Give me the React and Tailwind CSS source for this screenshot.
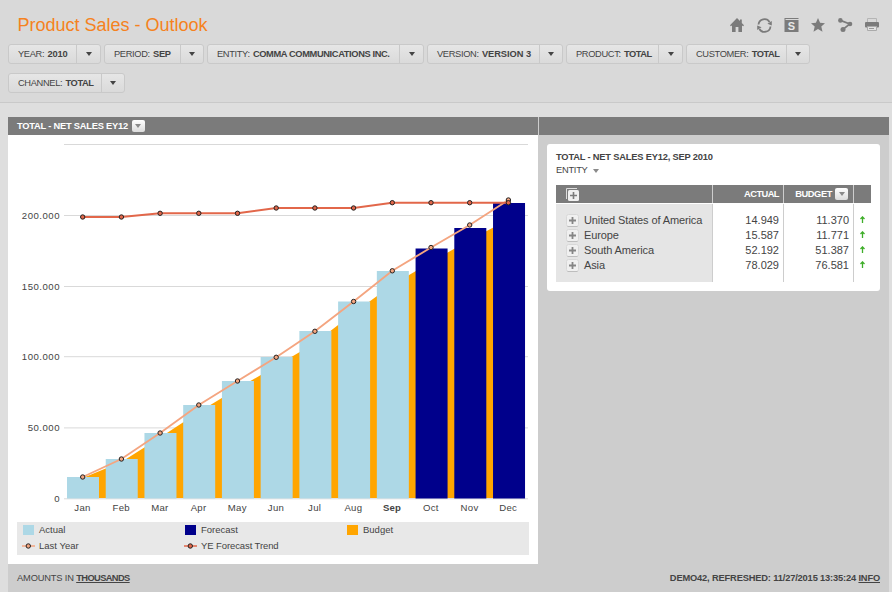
import React from 'react';

const filterRows = [
    [
        { label: 'YEAR:', value: '2010', size: 'w-[93px]', arrow: 'w-6', tracking: 'tracking-[-0.1px]' },
        { label: 'PERIOD:', value: 'SEP', size: 'w-[100px]', arrow: 'w-[23px]', tracking: 'tracking-[-0.3px]' },
        { label: 'ENTITY:', value: 'COMMA COMMUNICATIONS INC.', size: 'w-[217px]', arrow: 'w-6', tracking: 'tracking-[-0.38px]' },
        { label: 'VERSION:', value: 'VERSION 3', size: 'w-[136px]', arrow: 'w-[23px]', tracking: 'tracking-[-0.05px]' },
        { label: 'PRODUCT:', value: 'TOTAL', size: 'w-[117px]', arrow: 'w-6', tracking: 'tracking-[-0.5px]' },
        { label: 'CUSTOMER:', value: 'TOTAL', size: 'w-[124px]', arrow: 'w-[23px]', tracking: 'tracking-[-0.5px]' },
    ],
    [{ label: 'CHANNEL:', value: 'TOTAL', size: 'w-[117px]', arrow: 'w-[23px]', tracking: 'tracking-[-0.4px]' }],
];

const months = ['Jan', 'Feb', 'Mar', 'Apr', 'May', 'Jun', 'Jul', 'Aug', 'Sep', 'Oct', 'Nov', 'Dec'];

// all y values are in chart units, top of the chart is 0
const bars = [342, 324, 298, 270, 246, 222, 196, 166.5, 136, 113.5, 93, 68];
const lastYear = [342, 324, 298, 270, 246, 222.3, 196.3, 166.5, 135.8, 112.5, 90, 65];
const trend = [82, 82, 78.3, 78.3, 78.3, 73, 73, 73, 67.7, 67.7, 67.7, 67.7];
const budget = [343, 327, 302.5, 277, 253.5, 231, 208, 178, 150, 127, 105, 84.5];

const grid = [
    { y: 9.5, label: '' },
    { y: 80.5, label: '200.000' },
    { y: 151.5, label: '150.000' },
    { y: 221.7, label: '100.000' },
    { y: 292.9, label: '50.000' },
    { y: 363.8, label: '0' },
];

const cx = (i) => 74.7 + i * 38.7;
const toPoints = (values) => values.map((y, i) => `${cx(i)},${y}`).join(' ');

const rows = [
    { name: 'United States of America', actual: '14.949', budget: '11.370' },
    { name: 'Europe', actual: '15.587', budget: '11.771' },
    { name: 'South America', actual: '52.192', budget: '51.387' },
    { name: 'Asia', actual: '78.029', budget: '76.581' },
];

const Caret = ({ className }) => (
    <svg width="6" height="4" viewBox="0 0 6 4" className={className}>
        <path d="M0 0h6L3 4z" fill="currentColor" />
    </svg>
);

const Filter = ({ label, value, size, arrow, tracking }) => (
    <div className={`flex h-5 ${size} rounded-[3px] border border-[#c9c9c9] bg-linear-to-b from-[#e6e6e6] to-[#dadada]`}>
        <div className="flex-1 pl-[9px] leading-[18px] tracking-[-0.35px] whitespace-nowrap">
            {label} <span className={`ml-px font-bold ${tracking}`}>{value}</span>
        </div>
        <div className={`flex ${arrow} items-center justify-center border-l border-[#c9c9c9]`}>
            <Caret className="text-[#444]" />
        </div>
    </div>
);

const MenuButton = () => (
    <span className="flex h-3 w-[13px] items-center justify-center rounded-[2px] bg-linear-to-b from-white to-[#dcdcdc]">
        <Caret className="text-[#8a8a8a]" />
    </span>
);

const PlusButton = () => (
    <svg width="13" height="13" viewBox="0 0 13 13" className="shrink-0">
        <rect x="0.5" y="0.5" width="12" height="12" rx="2" fill="#f0f0f0" stroke="#d8d8d8" />
        <path d="M1.5 12.5h10" stroke="#bdbdbd" />
        <path d="M3 6.5h7M6.5 3v7" stroke="#858585" strokeWidth="1.8" />
    </svg>
);

const Toolbar = () => (
    <div className="grid grid-cols-[repeat(6,27px)] pt-[18px] text-[#7b7b7b]">
        <svg width="14" height="14" viewBox="0 0 14 14" fill="currentColor">
            <path d="M7 0L0 7.3l.8.9L2 7.4V14h3.6V9h2.8v5H12V7.4l1.2.8.8-.9-2.2-2.4V1.4H10v1.7z" />
        </svg>
        <svg width="15" height="15" viewBox="0 0 15 15" fill="none" stroke="currentColor" strokeWidth="1.8">
            <path d="M1.5 6.5A6 6 0 0 1 12.6 4M13.5 8.5A6 6 0 0 1 2.4 11" />
            <path d="M14.8 3v4.4l-4.4-1.7zM.2 12V7.6l4.4 1.7z" fill="currentColor" stroke="none" />
        </svg>
        <svg width="15" height="14" viewBox="0 0 15 14">
            <path d="M.5 0h14v1h-13v1h13v12h-14z" fill="currentColor" />
            <text x="7.5" y="12" textAnchor="middle" className="fill-[#e8e8e8] font-['Liberation_Sans',sans-serif] text-[11px] font-bold">S</text>
        </svg>
        <svg width="14" height="14" viewBox="0 0 14 14" fill="currentColor">
            <path d="M7 0l2.1 4.8 4.9.4-3.7 3.3 1.2 5.3L7 11l-4.5 2.8 1.2-5.3L0 5.2l4.9-.4z" />
        </svg>
        <svg width="15" height="14" viewBox="0 0 15 14" fill="currentColor">
            <path d="M2.4 2.4L11.8 6L5 11.4" fill="none" stroke="currentColor" strokeWidth="1.7" />
            <circle cx="2.4" cy="2.4" r="2.3" />
            <circle cx="12" cy="6" r="2.3" />
            <circle cx="5" cy="11.4" r="2.5" />
        </svg>
        <svg width="14" height="14" viewBox="0 0 14 14" fill="currentColor">
            <path d="M2.5 4V.5h9V4" fill="none" stroke="#b5b5b5" />
            <rect y="4" width="14" height="5.5" rx="1" />
            <path d="M2.5 8.5h9v4h-9z" fill="#e2e2e2" stroke="#aaa" />
            <path d="M4 10.5h5" stroke="#999" />
        </svg>
    </div>
);

const SalesChart = () => (
    <svg width="530" height="387" viewBox="0 0 530 387" className="block">
        {grid.map(({ y, label }) => (
            <g key={y}>
                <path d={`M56 ${y}H520`} stroke="#d9d9d9" />
                <text x="52" y={Math.round(y + 3.4)} textAnchor="end" className="fill-[#444] text-[9.6px] tracking-[0.5px]">{label}</text>
            </g>
        ))}
        <polygon points={`${cx(0)},363 ${toPoints(budget)} ${cx(11)},363`} fill="#ffa500" />
        {bars.map((y, i) => (
            <g key={months[i]}>
                <rect
                    x={59 + i * 38.73}
                    y={y}
                    width="32"
                    height={363.5 - y}
                    fill={i < 9 ? '#add8e6' : '#00008b'}
                />
                <text
                    x={cx(i) - 0.2}
                    y="376"
                    textAnchor="middle"
                    className={i === 8 ? 'fill-[#444] text-[9.6px] font-bold tracking-[0.2px]' : 'fill-[#444] text-[9.6px] tracking-[0.3px]'}
                >
                    {months[i]}
                </text>
            </g>
        ))}
        <polyline points={toPoints(lastYear)} fill="none" stroke="#f4a580" strokeWidth="1.9" />
        {lastYear.map((y, i) => (
            <circle key={i} cx={cx(i)} cy={y} r="2.2" fill="#f4a580" stroke="#222" />
        ))}
        <polyline points={toPoints(trend)} fill="none" stroke="#e2674a" strokeWidth="1.9" />
        {trend.map((y, i) => (
            <circle key={i} cx={cx(i)} cy={y} r="2.2" fill="#e2674a" stroke="#222" />
        ))}
    </svg>
);

const LineMarker = ({ color }) => (
    <svg width="13" height="6" viewBox="0 0 13 6">
        <path d="M0 3h13" stroke={color} strokeWidth="1.5" />
        <circle cx="6.3" cy="3" r="2.2" fill={color} stroke="#222" />
    </svg>
);

const Legend = () => (
    <div className="ml-[9px] grid h-[33px] w-[512px] grid-cols-[162px_162px_auto] grid-rows-[16px_16px] bg-[#e8e8e8] pl-[5px] text-[9.5px] leading-4">
        <div className="flex items-center gap-[5px] pl-px"><span className="h-[10px] w-[11px] bg-[#add8e6]"></span>Actual</div>
        <div className="flex items-center gap-[5px] pl-px"><span className="h-[10px] w-[11px] bg-[#00008b]"></span>Forecast</div>
        <div className="flex items-center gap-[5px] pl-px"><span className="h-[10px] w-[11px] bg-[#ffa500]"></span>Budget</div>
        <div className="flex items-center gap-1"><LineMarker color="#f4a580" />Last Year</div>
        <div className="flex items-center gap-1 tracking-[-0.1px]"><LineMarker color="#e2674a" />YE Forecast Trend</div>
    </div>
);

const EntityTable = () => (
    <div className="mt-[9px] ml-2 h-[147px] w-[333px] rounded-[3px] bg-white pt-[7px] pl-[9px]">
        <div className="text-[9.3px] leading-3 font-bold tracking-[-0.18px]">TOTAL - NET SALES EY12, SEP 2010</div>
        <div className="flex h-4 items-center gap-[5px] text-[9.3px] tracking-[-0.25px]">
            ENTITY <Caret className="text-[#8a8a8a]" />
        </div>
        <div className="mt-[6px] grid w-[315px] grid-cols-[157px_71px_70px_17px]">
            <div className="flex h-[18px] items-center border-r border-[#cdcdcd] bg-[#7b7b7b] pl-[10px]">
                <svg width="13" height="13" viewBox="0 0 13 13">
                    <path d="M.5 11V.5H11" fill="none" stroke="#ddd" />
                    <rect x="2" y="2" width="11" height="11" rx="1.5" fill="#f0f0f0" />
                    <path d="M4 7.5h7M7.5 4v7" stroke="#7b7b7b" strokeWidth="1.6" />
                </svg>
            </div>
            <div className="h-[18px] border-r border-[#cdcdcd] bg-[#7b7b7b] pr-1 text-right text-[9.3px] leading-[18px] font-bold tracking-[-0.55px] text-white">ACTUAL</div>
            <div className="flex h-[18px] items-center justify-end gap-[3px] border-r border-[#cdcdcd] bg-[#7b7b7b] pr-[5px] text-[9.3px] font-bold tracking-[-0.4px] text-white">
                <span className="pt-px">BUDGET</span> <MenuButton />
            </div>
            <div className="h-[18px] bg-[#7b7b7b]"></div>
            <div className="mt-px h-[78px] border-r border-[#cdcdcd] bg-[#e5e5e5] pt-[9px] pl-[10px]">
                {rows.map((row) => (
                    <div key={row.name} className="flex h-[15px] items-center gap-[5px] text-[11px] tracking-[-0.12px] whitespace-nowrap"><PlusButton />{row.name}</div>
                ))}
            </div>
            <div className="mt-px border-r border-[#cdcdcd] pt-[9px] pr-1 text-right text-[11px] leading-[15px]">
                {rows.map((row) => <div key={row.name}>{row.actual}</div>)}
            </div>
            <div className="mt-px border-r border-[#cdcdcd] pt-[9px] pr-1 text-right text-[11px] leading-[15px]">
                {rows.map((row) => <div key={row.name}>{row.budget}</div>)}
            </div>
            <div className="mt-px pt-2 pl-[6px]">
                {rows.map((row) => (
                    <div key={row.name} className="flex h-[15px] items-center">
                        <svg width="5" height="7" viewBox="0 0 5 7">
                            <path d="M2.5 7V1M.5 3L2.5.9l2 2.1" fill="none" stroke="#3fae2a" strokeWidth="1.3" />
                        </svg>
                    </div>
                ))}
            </div>
        </div>
    </div>
);

const App = () => {
    return (
        <div className="h-[592px] w-[892px] overflow-hidden bg-[#dedede] font-['Liberation_Sans',Arial,sans-serif] text-[#444]">
            <header className="h-[103px] border-b border-[#c9c9c9] bg-[#d9d9d9]">
                <div className="flex h-11 justify-between pl-[17.5px]">
                    <h1 className="pt-[11px] text-[18px] leading-7 whitespace-nowrap text-[#f58220]">Product Sales - Outlook</h1>
                    <Toolbar />
                </div>
                <div className="flex flex-col gap-[9px] pl-2 text-[9.3px]">
                    {filterRows.map((row, i) => (
                        <div key={i} className="flex gap-[3px]">
                            {row.map((f) => <Filter key={f.label} {...f} />)}
                        </div>
                    ))}
                </div>
            </header>

            <main className="mt-[14px] ml-2 h-[475px] w-[881px] bg-[#cdcdcd]">
                <div className="flex h-[447px]">
                    <section className="w-[530px] bg-white">
                        <div className="flex h-[18px] items-center gap-[4px] bg-[#7b7b7b] pl-[9px] text-[9.3px] font-bold tracking-[-0.22px] text-white">
                            <span className="pt-px">TOTAL - NET SALES EY12</span> <MenuButton />
                        </div>
                        <SalesChart />
                        <Legend />
                    </section>
                    <section className="ml-px flex-1">
                        <div className="h-[18px] bg-[#7b7b7b]"></div>
                        <EntityTable />
                    </section>
                </div>
                <footer className="flex h-7 items-center justify-between pt-px pr-[9px] pl-[9px] text-[9.3px] tracking-[-0.16px]">
                    <div>AMOUNTS IN <span className="font-bold tracking-[-0.6px] underline">THOUSANDS</span></div>
                    <div className="font-bold">DEMO42, REFRESHED: 11/27/2015 13:35:24 <span className="underline">INFO</span></div>
                </footer>
            </main>
        </div>
    );
};

export default App;
